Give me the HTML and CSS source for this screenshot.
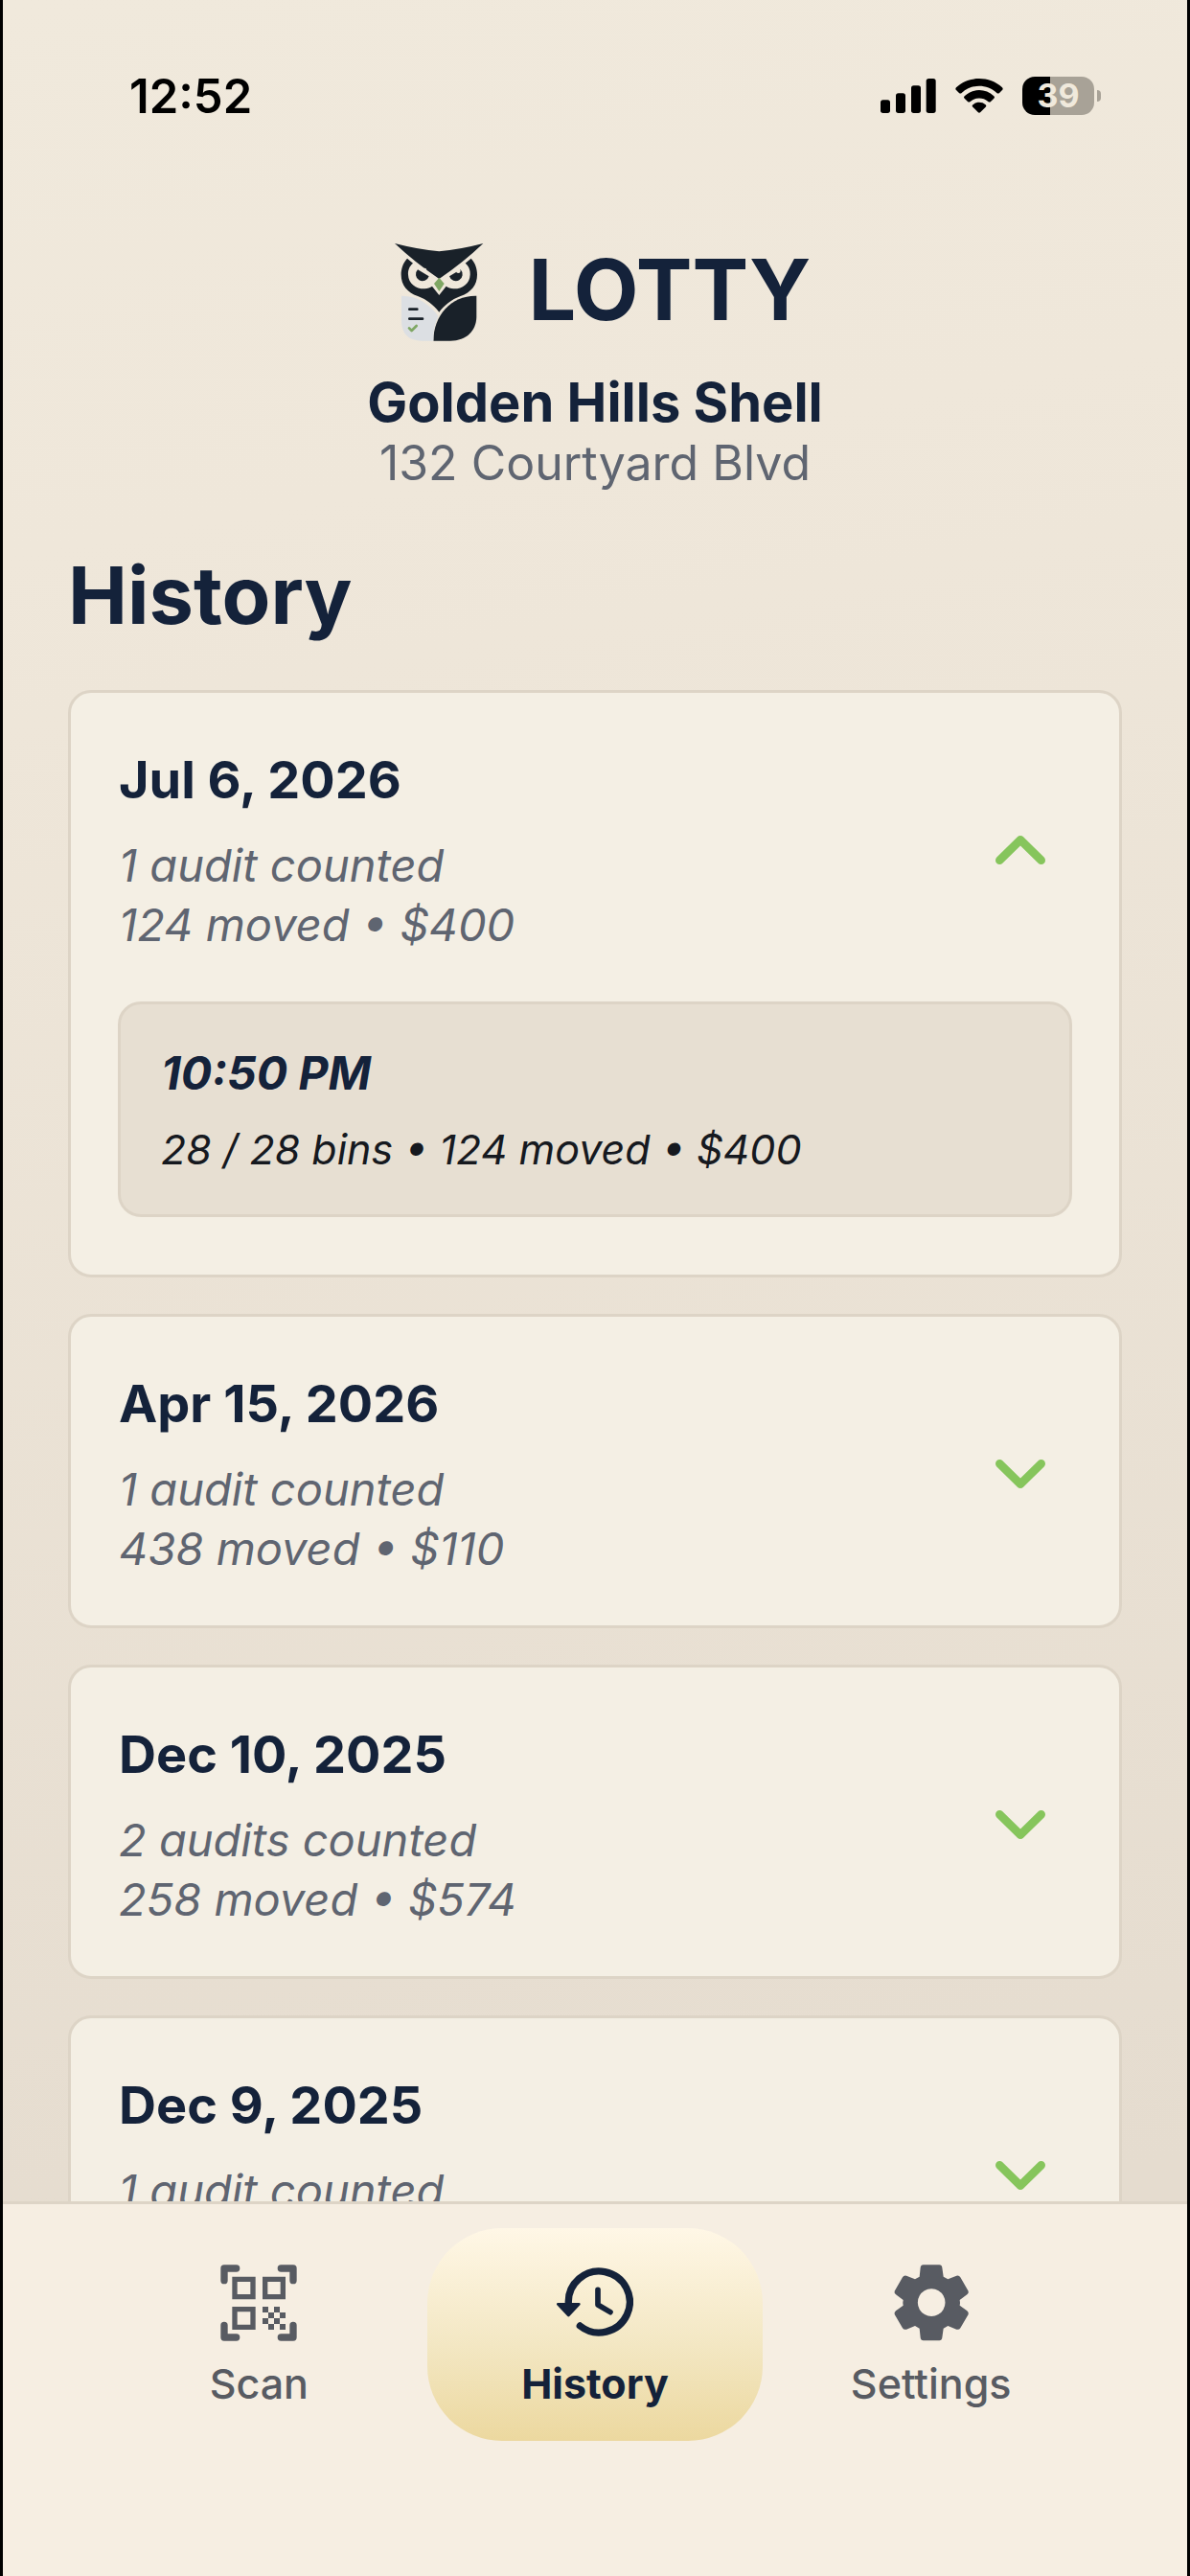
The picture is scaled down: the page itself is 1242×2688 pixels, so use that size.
FILE: index.html
```html
<!DOCTYPE html>
<html lang="en">
<head>
    <meta charset="UTF-8">
    <meta name="viewport" content="width=device-width, initial-scale=1">
    <title>Lotty - History</title>
    <link rel="stylesheet" href="styles.css">
</head>
<body>
    <div class="app">
        <div class="status-bar">
            <span class="clock">12:52</span>
            <div class="status-icons">
                <svg class="signal" viewBox="0 0 174 108" aria-hidden="true">
                    <rect x="0" y="67" width="30" height="41" rx="8"/>
                    <rect x="48" y="46" width="30" height="62" rx="8"/>
                    <rect x="96" y="22" width="30" height="86" rx="8"/>
                    <rect x="143" y="0" width="30" height="108" rx="8"/>
                </svg>
                <svg class="wifi" viewBox="0 0 150 108" aria-hidden="true">
                    <path d="M3 28C43-9 107-9 147 28Q151 32 147 36L138 45Q134 48 130 45C99 16 51 16 20 45Q16 48 12 45L3 36Q-1 32 3 28Z"/>
                    <path d="M29 55C55 30 95 30 121 55Q125 59 121 62L111 72Q107 75 103 72C87 58 63 58 47 72Q43 75 39 72L29 62Q25 59 29 55Z"/>
                    <path d="M55 82C66 72 84 72 95 82Q99 86 95 89L79 105Q75 109 71 105L55 89Q51 86 55 82Z"/>
                </svg>
                <div class="battery">
                    <span class="battery-level">39</span>
                    <span class="battery-tip"></span>
                </div>
            </div>
        </div>

        <header class="header">
            <div class="brand">
                <svg class="owl" viewBox="18 57 372 324" aria-hidden="true">
                    <g fill="#192129">
                        <path d="M105 104C91 119 86 138 86 155C86 187 105 210 138 222C167 233 188 250 205 272C222 250 243 233 272 222C305 210 324 187 324 155C324 138 319 119 305 104L287 119C299 129 303 142 302 155C301 184 276 200 250 199C241 198 233 196 227 191L205 219L183 191C177 196 169 198 160 199C134 200 109 184 108 155C107 142 111 129 123 119Z"/>
                        <path d="M66 57Q140 76 205 82Q270 76 343 57Q280 117 205 168Q130 117 66 57Z"/>
                        <path d="M138 139L173 160A21 21 0 1 1 138 139Z"/>
                        <path d="M272 139L237 160A21 21 0 1 0 272 139Z"/>
                        <path d="M322 221C245 219 187 281 187 362H240C290 362 322 331 322 285Z"/>
                    </g>
                    <path fill="#dcdfe3" d="M87 221C134 220 175 246 202 284C191 308 186 334 187 362H150C111 362 87 340 87 300Z"/>
                    <path fill="#7fa764" d="M205 164L221 183L205 207L189 183Z"/>
                    <path class="owl-line" stroke="#192129" d="M112 263H136M112 293H153"/>
                    <path class="owl-line" stroke="#7fa764" d="M111 322L119 330L134 315"/>
                    <circle cx="159" cy="141" r="7" fill="#f0e9dc"/>
                    <circle cx="265" cy="143" r="7" fill="#f0e9dc"/>
                </svg>
                <span class="brand-name">LOTTY</span>
            </div>
            <div class="store-name">Golden Hills Shell</div>
            <div class="store-address">132 Courtyard Blvd</div>
        </header>

        <main class="content">
            <h1>History</h1>

            <details class="card" open>
                <summary>
                    <div class="day">
                        <h2>Jul 6, 2026</h2>
                        <p>1 audit counted</p>
                        <p>124 moved • $400</p>
                    </div>
                    <svg class="chevron" viewBox="0 0 156 90" aria-hidden="true"><path d="M13 13L78 77L143 13"/></svg>
                </summary>
                <div class="audits">
                    <div class="audit">
                        <h3>10:50 PM</h3>
                        <p>28 / 28 bins • 124 moved • $400</p>
                    </div>
                </div>
            </details>

            <details class="card">
                <summary>
                    <div class="day">
                        <h2>Apr 15, 2026</h2>
                        <p>1 audit counted</p>
                        <p>438 moved • $110</p>
                    </div>
                    <svg class="chevron" viewBox="0 0 156 90" aria-hidden="true"><path d="M13 13L78 77L143 13"/></svg>
                </summary>
            </details>

            <details class="card">
                <summary>
                    <div class="day">
                        <h2>Dec 10, 2025</h2>
                        <p>2 audits counted</p>
                        <p>258 moved • $574</p>
                    </div>
                    <svg class="chevron" viewBox="0 0 156 90" aria-hidden="true"><path d="M13 13L78 77L143 13"/></svg>
                </summary>
            </details>

            <details class="card">
                <summary>
                    <div class="day">
                        <h2>Dec 9, 2025</h2>
                        <p>1 audit counted</p>
                    </div>
                    <svg class="chevron" viewBox="0 0 156 90" aria-hidden="true"><path d="M13 13L78 77L143 13"/></svg>
                </summary>
            </details>
        </main>

        <nav class="tab-bar">
            <a class="tab" href="#scan">
                <svg viewBox="61 37 240 240" aria-hidden="true">
                    <path class="line" stroke-width="22" d="M73 87V49H111M251 49H289V87M73 227V265H111M251 265H289V227"/>
                    <path fill="none" stroke="currentColor" stroke-width="16" d="M106 83H163V138H106ZM201 83H257V138H201ZM106 177H163V233H106Z"/>
                    <path fill="currentColor" d="M193 169h18v18h-18zM229 169h18v18h-18zM211 187h18v18h-18zM247 187h18v18h-18zM193 205h18v18h-18zM229 205h18v18h-18zM211 223h18v18h-18zM247 223h18v18h-18z"/>
                </svg>
                <span>Scan</span>
            </a>
            <a class="tab active" href="#history" aria-current="page">
                <svg viewBox="123 189 240 240" aria-hidden="true">
                    <path class="line" stroke-width="22" d="M160 311A96 96 0 1 1 196 381"/>
                    <path class="line" stroke-width="17" d="M252 268V315L291 338"/>
                    <path class="line" stroke-width="8" d="M127 313H193L160 348Z"/>
                    <path fill="currentColor" d="M127 311H193L160 348Z"/>
                </svg>
                <span>History</span>
            </a>
            <a class="tab" href="#settings">
                <svg viewBox="454 428 240 240" aria-hidden="true">
                    <path fill="currentColor" fill-rule="evenodd" d="M540 438Q541 429 549 429H599Q607 429 608 438L612 466L626 474L653 463Q661 461 665 468L690 511Q692 517 686 522L663 539Q665 547 663 556L686 573Q692 578 690 584L665 627Q661 633 653 631L626 620L612 628L608 657Q607 666 599 666H549Q541 666 540 657L537 628L523 620L496 631Q488 633 484 627L459 584Q457 578 463 573L486 556Q484 547 486 539L463 522Q457 517 459 511L484 468Q488 461 496 463L523 474L537 466ZM574 504A43 43 0 1 0 575 504Z"/>
                </svg>
                <span>Settings</span>
            </a>
        </nav>
    </div>
</body>
</html>
```

FILE: styles.css
```css
:root {
    --navy: #14223a;
    --muted: #5f6571;
    --tab-color: #585b62;
    --green: #86c55c;
    --card: #f4efe4;
    --inner: #e7dfd2;
    --border: #ddd4c6;
    --bar: #f6eee2;
}

* {
    box-sizing: border-box;
}

body {
    margin: 0;
    font-family: Inter, 'Liberation Sans', sans-serif;
    color: var(--navy);
    background: #000;
}

h1, h2, h3, p {
    margin: 0;
}

.app {
    display: flex;
    flex-direction: column;
    height: 100vh;
    margin: 0 3px;
    overflow: hidden;
    background: linear-gradient(170deg, #f0e9dc 0%, #efe7da 20%, #e5dccf 85%);
}

/* status bar */
.status-bar {
    display: flex;
    justify-content: space-between;
    align-items: center;
    height: 200px;
    flex-shrink: 0;
    padding: 0 90px 0 132px;
    color: #000;
}

.clock {
    font-size: 49px;
    font-weight: 600;
}

.status-icons {
    display: flex;
    align-items: center;
    gap: 20px;
}

.signal {
    width: 58px;
    height: 36px;
}

.wifi {
    width: 50px;
    height: 36px;
}

.battery {
    display: flex;
    align-items: center;
    gap: 3px;
}

.battery-level {
    width: 75px;
    border-radius: 13px;
    background: linear-gradient(90deg, #000 39%, #a8a297 39%);
    color: #f0e9dc;
    font-size: 34px;
    font-weight: 700;
    line-height: 40px;
    text-align: center;
}

.battery-tip {
    width: 4px;
    height: 12px;
    border-radius: 0 6px 6px 0;
    background: #a8a297;
}

/* header */
.header {
    flex-shrink: 0;
    padding-top: 54px;
    text-align: center;
}

.brand {
    display: flex;
    justify-content: center;
    gap: 32px;
    margin-bottom: 27px;
}

.owl {
    width: 124px;
    height: 108px;
}

.owl-line {
    fill: none;
    stroke-width: 8;
    stroke-linecap: round;
    stroke-linejoin: round;
}

.brand-name {
    font-size: 88px;
    font-weight: 700;
    line-height: 96px;
}

.store-name {
    font-size: 56px;
    font-weight: 700;
    line-height: 62px;
}

.store-address {
    font-size: 50px;
    font-weight: 400;
    line-height: 64px;
    color: var(--muted);
}

/* history list */
.content {
    flex: 1;
    min-height: 0;
    overflow: hidden;
    padding: 58px 68px 0;
}

h1 {
    margin-bottom: 51px;
    font-size: 83px;
    font-weight: 700;
    line-height: 96px;
}

.card {
    margin-bottom: 38px;
    border: 3px solid var(--border);
    border-radius: 24px;
    background: var(--card);
}

summary {
    display: flex;
    justify-content: space-between;
    align-items: center;
    padding: 54px 77px 49px 50px;
    list-style: none;
    cursor: pointer;
}

.day {
    min-height: 219px;
}

h2 {
    margin-bottom: 21px;
    font-size: 54px;
    font-weight: 700;
    line-height: 74px;
}

summary p {
    font-size: 47px;
    font-style: italic;
    line-height: 62px;
    color: var(--muted);
}

.chevron {
    width: 52px;
    height: 30px;
    fill: none;
    stroke: var(--green);
    stroke-width: 26;
    stroke-linecap: round;
    stroke-linejoin: round;
}

.card[open] .chevron {
    transform: rotate(180deg);
}

.audits {
    padding: 0 49px 60px;
}

.audit {
    padding: 42px 42px 38px;
    border: 3px solid var(--border);
    border-radius: 24px;
    background: var(--inner);
    font-style: italic;
}

h3 {
    margin-bottom: 19px;
    font-size: 48px;
    font-weight: 700;
    line-height: 60px;
}

.audit p {
    font-size: 43px;
    line-height: 60px;
    color: #16191f;
}

/* bottom tabs */
.tab-bar {
    display: flex;
    flex-shrink: 0;
    padding: 25px 92px 141px;
    border-top: 3px solid var(--border);
    background: var(--bar);
}

.tab {
    display: flex;
    flex: 1;
    flex-direction: column;
    align-items: center;
    gap: 18px;
    padding: 38px 0 34px;
    border-radius: 78px;
    color: var(--tab-color);
    font-size: 43px;
    font-weight: 500;
    line-height: 52px;
    text-decoration: none;
}

.tab svg {
    width: 80px;
    height: 80px;
}

.tab .line {
    stroke: currentColor;
    stroke-linecap: round;
    stroke-linejoin: round;
    fill: none;
}

.tab.active {
    background: linear-gradient(#fff7e6, #f3e7c3 55%, #ecd89f);
    color: var(--navy);
    font-weight: 700;
}
```
